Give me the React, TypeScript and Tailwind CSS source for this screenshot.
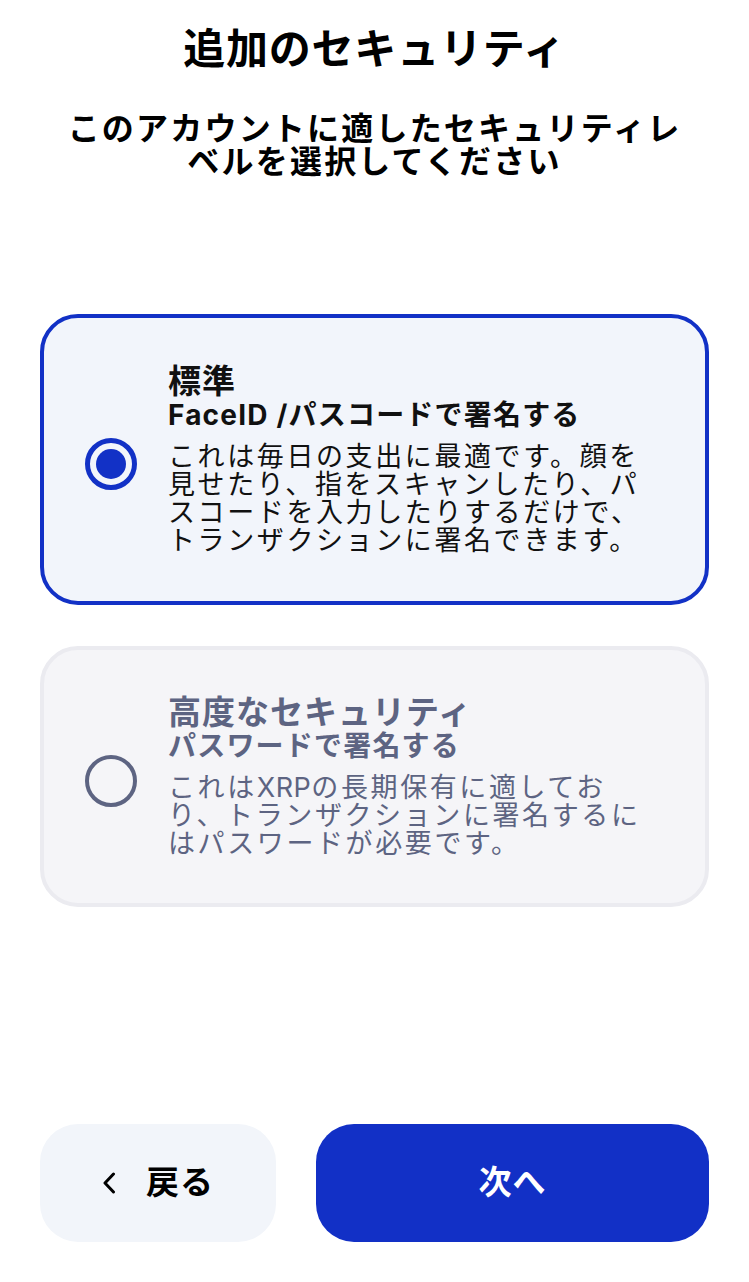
import React, { useState } from 'react';

type Level = 'standard' | 'advanced';

interface OptionCardProps {
  selected: boolean;
  title: string;
  subtitle: string;
  lines: React.ReactNode[];
  onSelect: () => void;
}

const OptionCard: React.FC<OptionCardProps> = ({ selected, title, subtitle, lines, onSelect }) => {
  return (
    <button
      type="button"
      onClick={onSelect}
      className={`w-full flex items-center rounded-[38px] border-4 pl-[41px] pr-6 text-left ${
        selected
          ? 'h-[291px] border-[#1231c6] bg-[#f2f5fb] text-[#111111]'
          : 'h-[261px] border-[#ebebf0] bg-[#f5f5f8] text-[#5d6482]'
      }`}
    >
      {/* Radio */}
      <div
        className={`mt-2 w-[52px] h-[52px] shrink-0 rounded-full flex items-center justify-center ${
          selected ? 'border-[5px] border-[#1231c6]' : 'border-4 border-[#5d6482]'
        }`}
      >
        {selected && <div className="w-[30px] h-[30px] rounded-full bg-[#1231c6]" />}
      </div>

      <div className="ml-[31px] flex flex-col">
        <div className="text-[33px] leading-[35px] font-bold tracking-[1px]">{title}</div>
        <div className="text-[28px] leading-[32px] font-bold tracking-[1.2px]">{subtitle}</div>
        <div className="mt-3 text-[27px] leading-[28px] font-normal tracking-[2.6px]">
          {lines.map((l, i) => (
            <div key={i} className="whitespace-nowrap">{l}</div>
          ))}
        </div>
      </div>
    </button>
  );
};

export default function App() {
  const [level, setLevel] = useState<Level>('standard');

  return (
    <div
      className="min-h-screen bg-white flex flex-col px-10 pb-10"
      style={{ fontFamily: 'Inter, "Noto Sans CJK JP", sans-serif' }}
    >
      {/* Header */}
      <h1 className="pt-[23px] text-center text-[42px] leading-[52px] font-bold text-black tracking-[0.8px]">
        追加のセキュリティ
      </h1>
      <p className="mt-[37px] text-center text-[32px] leading-[33px] font-bold text-black tracking-[2.2px]">
        このアカウントに適したセキュリティレ
        <br />
        ベルを選択してください
      </p>

      {/* Options */}
      <div className="mt-[136px] flex flex-col gap-[41px]">
        <OptionCard
          selected={level === 'standard'}
          onSelect={() => setLevel('standard')}
          title="標準"
          subtitle="FaceID /パスコードで署名する"
          lines={[
            'これは毎日の支出に最適です。顔を',
            '見せたり、指をスキャンしたり、パ',
            'スコードを入力したりするだけで、',
            'トランザクションに署名できます。',
          ]}
        />
        <OptionCard
          selected={level === 'advanced'}
          onSelect={() => setLevel('advanced')}
          title="高度なセキュリティ"
          subtitle="パスワードで署名する"
          lines={[
            <>
              これは<span className="tracking-[0.5px]">XRP</span>の長期保有に適してお
            </>,
            'り、トランザクションに署名するに',
            'はパスワードが必要です。',
          ]}
        />
      </div>

      {/* Footer buttons */}
      <div className="mt-auto flex gap-10">
        <button
          type="button"
          className="w-[236px] h-[118px] rounded-[38px] bg-[#f2f5fa] flex items-center justify-center gap-[30px] text-black"
        >
          <svg width="14" height="22" viewBox="0 0 14 22" fill="none">
            <path d="M11.5 2 L3 11 L11.5 20" stroke="currentColor" strokeWidth="3" strokeLinecap="round" strokeLinejoin="round" />
          </svg>
          <span className="text-[33px] font-bold tracking-[1px]">戻る</span>
        </button>
        <button
          type="button"
          className="flex-1 h-[118px] rounded-[38px] bg-[#1230c6] flex items-center justify-center text-white"
        >
          <span className="text-[33px] font-bold tracking-[1px]">次へ</span>
        </button>
      </div>
    </div>
  );
}
